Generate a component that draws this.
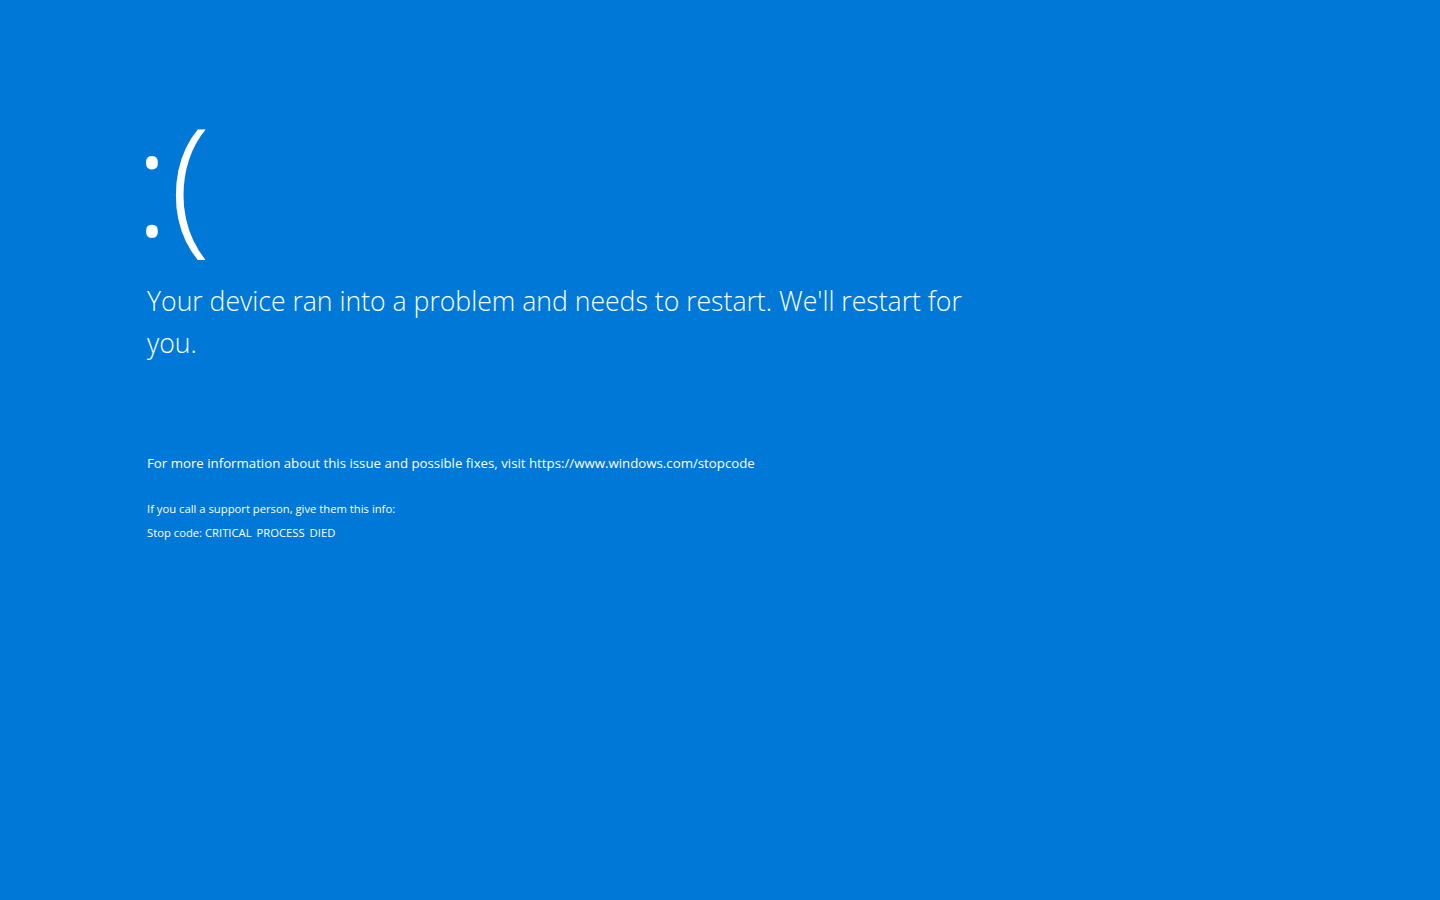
export default function App() {
  return (
    <div
      className="w-[1440px] h-[900px] bg-[#0078d7] text-white overflow-hidden"
      style={{ fontFamily: '"Open Sans", "Noto Sans", sans-serif' }}
    >
      <div className="pl-[140px] pt-[78px]">
        <div className="ml-[-6px] text-[150px] leading-[200px] font-light h-[200px]">:(</div>
        <p className="mt-[2px] pl-[7px] w-[850px] text-[26.6px] leading-[42px] font-light">
          Your device ran into a problem and needs to restart. We'll restart for you.
        </p>
        <p className="pl-[7px] mt-[89px] text-[13.25px] leading-[20px]">
          For more information about this issue and possible fixes, visit https://www.windows.com/stopcode
        </p>
        <p className="pl-[7px] mt-[24px] text-[11.25px] leading-[24px]">
          If you call a support person, give them this info:
        </p>
        <p className="pl-[7px] text-[11.25px] leading-[24px]">
          Stop code: CRITICAL<span className="text-transparent">_</span>PROCESS
          <span className="text-transparent">_</span>DIED
        </p>
      </div>
    </div>
  );
}
